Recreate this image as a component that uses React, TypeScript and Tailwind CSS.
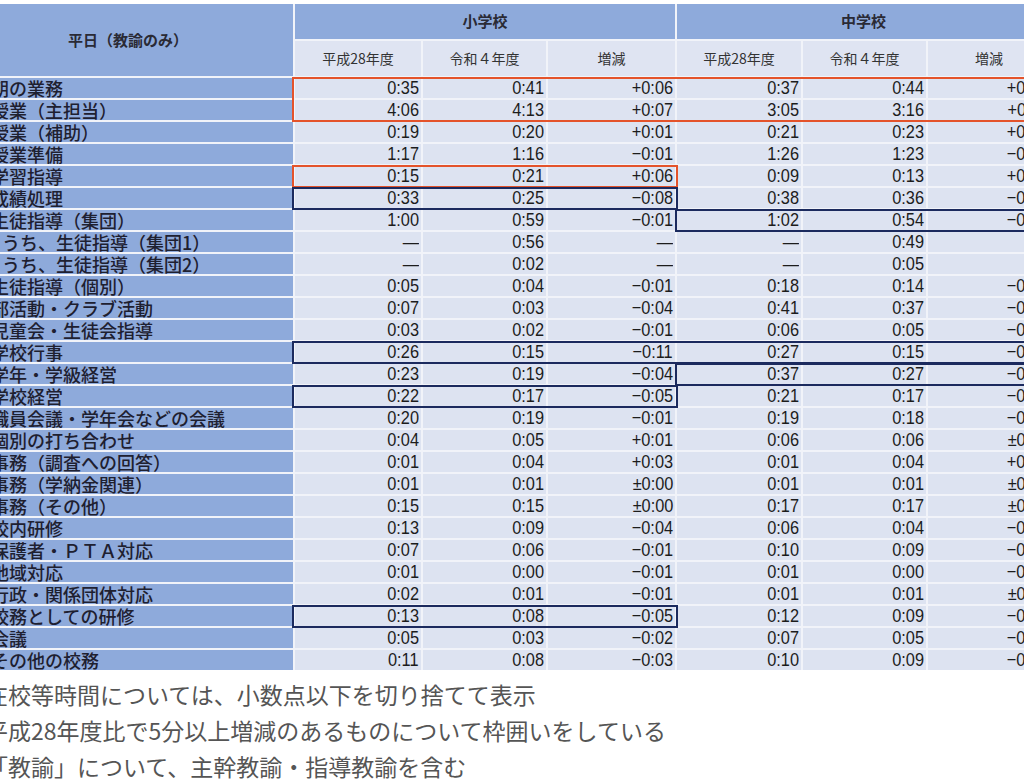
import React from "react";

const GRID = "grid grid-cols-[293px_126px_123px_127px_124px_123px_122px]";

type Row = [string, string, string, string, string, string, string, boolean?];

const rows: Row[] = [
  ["朝の業務", "0:35", "0:41", "+0:06", "0:37", "0:44", "+0:07"],
  ["授業（主担当）", "4:06", "4:13", "+0:07", "3:05", "3:16", "+0:11"],
  ["授業（補助）", "0:19", "0:20", "+0:01", "0:21", "0:23", "+0:02"],
  ["授業準備", "1:17", "1:16", "−0:01", "1:26", "1:23", "−0:03"],
  ["学習指導", "0:15", "0:21", "+0:06", "0:09", "0:13", "+0:04"],
  ["成績処理", "0:33", "0:25", "−0:08", "0:38", "0:36", "−0:02"],
  ["生徒指導（集団）", "1:00", "0:59", "−0:01", "1:02", "0:54", "−0:08"],
  ["うち、生徒指導（集団1）", "—", "0:56", "—", "—", "0:49", "", true],
  ["うち、生徒指導（集団2）", "—", "0:02", "—", "—", "0:05", "", true],
  ["生徒指導（個別）", "0:05", "0:04", "−0:01", "0:18", "0:14", "−0:04"],
  ["部活動・クラブ活動", "0:07", "0:03", "−0:04", "0:41", "0:37", "−0:04"],
  ["児童会・生徒会指導", "0:03", "0:02", "−0:01", "0:06", "0:05", "−0:01"],
  ["学校行事", "0:26", "0:15", "−0:11", "0:27", "0:15", "−0:12"],
  ["学年・学級経営", "0:23", "0:19", "−0:04", "0:37", "0:27", "−0:10"],
  ["学校経営", "0:22", "0:17", "−0:05", "0:21", "0:17", "−0:04"],
  ["職員会議・学年会などの会議", "0:20", "0:19", "−0:01", "0:19", "0:18", "−0:01"],
  ["個別の打ち合わせ", "0:04", "0:05", "+0:01", "0:06", "0:06", "±0:00"],
  ["事務（調査への回答）", "0:01", "0:04", "+0:03", "0:01", "0:04", "+0:03"],
  ["事務（学納金関連）", "0:01", "0:01", "±0:00", "0:01", "0:01", "±0:00"],
  ["事務（その他）", "0:15", "0:15", "±0:00", "0:17", "0:17", "±0:00"],
  ["校内研修", "0:13", "0:09", "−0:04", "0:06", "0:04", "−0:02"],
  ["保護者・ＰＴＡ対応", "0:07", "0:06", "−0:01", "0:10", "0:09", "−0:01"],
  ["地域対応", "0:01", "0:00", "−0:01", "0:01", "0:00", "−0:01"],
  ["行政・関係団体対応", "0:02", "0:01", "−0:01", "0:01", "0:01", "±0:00"],
  ["校務としての研修", "0:13", "0:08", "−0:05", "0:12", "0:09", "−0:03"],
  ["会議", "0:05", "0:03", "−0:02", "0:07", "0:05", "−0:02"],
  ["その他の校務", "0:11", "0:08", "−0:03", "0:10", "0:09", "−0:01"],
];

const JP = "font-['Noto_Sans_CJK_JP',sans-serif]";
const NUM = "font-['Liberation_Sans','Noto_Sans_CJK_JP',sans-serif]";

function Box({ top, left, width, height, color }: { top: number; left: number; width: number; height: number; color: string }) {
  return (
    <div
      className={`absolute border-2 pointer-events-none ${color}`}
      style={{ top, left, width, height }}
    />
  );
}

function NumCell({ v }: { v: string }) {
  return (
    <div className="bg-[#dde3f1] flex items-center justify-end pr-[2px] overflow-hidden h-[20px]">
      <span className={`inline-block origin-right scale-x-[0.86] text-[19px] leading-[20px] text-[#1c1c1c] ${NUM}`}>{v}</span>
    </div>
  );
}

export default function App() {
  const r = (i: number) => 22 * i - 1;
  const RED = "border-[#e4532b]";
  const NAVY = "border-[#1b2a5e]";
  return (
    <div className={`w-[1024px] h-[784px] overflow-hidden bg-white ${JP}`}>
      <div className="w-[1024px] overflow-hidden">
        <div className="pt-[4px] bg-white">
          <div className={`${GRID} grid-rows-[35px_35px] gap-[2px] bg-[#f1f3f9] w-[1050px]`}>
            <div className="row-span-2 bg-[#8eaadb] flex items-center justify-center pr-[37px] text-[15px] font-bold text-[#2a2a35]">
              平日（教諭のみ）
            </div>
            <div className="col-span-3 bg-[#8eaadb] flex items-center justify-center text-[15px] font-bold text-[#2a2a35]">
              小学校
            </div>
            <div className="col-span-3 bg-[#8eaadb] flex items-center justify-center text-[15px] font-bold text-[#2a2a35]">
              中学校
            </div>
            {["平成28年度", "令和４年度", "増減", "平成28年度", "令和４年度", "増減"].map((h, i) => (
              <div key={i} className="bg-[#dfe4f2] flex items-center justify-center text-[14px] text-[#333]">
                {h}
              </div>
            ))}
          </div>
        </div>
        <div className="relative pt-[2px] bg-[#f1f3f9] w-[1050px]">
          <div className={`${GRID} auto-rows-[20px] gap-x-[2px] gap-y-[2px]`}>
            {rows.map((row, i) => (
              <React.Fragment key={i}>
                <div className="bg-[#8eaadb] overflow-hidden whitespace-nowrap h-[20px]">
                  <span
                    className={`block text-[18px] leading-[20px] font-medium text-[#1e2030] ${row[7] ? "ml-[2px]" : "ml-[-9px]"}`}
                  >
                    {row[0]}
                  </span>
                </div>
                {row.slice(1, 7).map((v, j) => (
                  <NumCell key={j} v={v as string} />
                ))}
              </React.Fragment>
            ))}
          </div>
          <div className="absolute inset-0 top-[2px]">
            <Box top={r(0)} left={292} width={800} height={45} color={RED} />
            <Box top={r(4)} left={292} width={386} height={23} color={RED} />
            <Box top={r(5)} left={292} width={386} height={23} color={NAVY} />
            <Box top={r(6)} left={675} width={400} height={23} color={NAVY} />
            <Box top={r(12)} left={292} width={800} height={23} color={NAVY} />
            <Box top={r(13)} left={675} width={400} height={23} color={NAVY} />
            <Box top={r(14)} left={292} width={386} height={23} color={NAVY} />
            <Box top={r(24)} left={292} width={386} height={23} color={NAVY} />
          </div>
        </div>
        <div className="pt-[6px] text-[23px] leading-[36px] text-[#555] whitespace-nowrap overflow-hidden">
          <div className="ml-[-15px]">在校等時間については、小数点以下を切り捨てて表示</div>
          <div className="ml-[-15px]">平成28年度比で5分以上増減のあるものについて枠囲いをしている</div>
          <div className="ml-[-15px]">「教諭」について、主幹教諭・指導教諭を含む</div>
        </div>
      </div>
    </div>
  );
}
